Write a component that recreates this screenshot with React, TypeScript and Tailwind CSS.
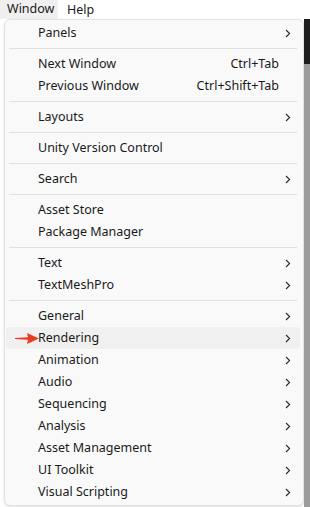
const groups: { label: string; shortcut?: string; sub?: boolean; active?: boolean }[][] = [
  [{ label: "Panels", sub: true }],
  [
    { label: "Next Window", shortcut: "Ctrl+Tab" },
    { label: "Previous Window", shortcut: "Ctrl+Shift+Tab" },
  ],
  [{ label: "Layouts", sub: true }],
  [{ label: "Unity Version Control" }],
  [{ label: "Search", sub: true }],
  [{ label: "Asset Store" }, { label: "Package Manager" }],
  [
    { label: "Text", sub: true },
    { label: "TextMeshPro", sub: true },
  ],
  [
    { label: "General", sub: true },
    { label: "Rendering", sub: true, active: true },
    { label: "Animation", sub: true },
    { label: "Audio", sub: true },
    { label: "Sequencing", sub: true },
    { label: "Analysis", sub: true },
    { label: "Asset Management", sub: true },
    { label: "UI Toolkit", sub: true },
    { label: "Visual Scripting", sub: true },
  ],
];

const Chevron = () => (
  <svg width="6" height="9" viewBox="0 0 6 9" className="shrink-0">
    <path d="M1 1 L4.6 4.5 L1 8" fill="none" stroke="#2b2b2b" strokeWidth="1.1" />
  </svg>
);

const RedArrow = () => (
  <svg width="25" height="11" viewBox="0 0 25 11" className="absolute left-[9px] top-[6px]">
    <path d="M0 4.9 L13 4.2 L12 0 L24 5.5 L12 11 L13 6.8 L0 6.1 Z" fill="#ea3a20" />
  </svg>
);

export default function App() {
  return (
    <div
      className="w-[310px] h-[507px] overflow-hidden bg-white text-[12.5px] text-[#1a1a1a]"
      style={{ fontFamily: '"Noto Sans", "Liberation Sans", sans-serif' }}
    >
      <div className="flex h-[19px] items-center bg-white">
        <div className="h-full w-[58px] bg-[#f0f0f0] pl-[7px] leading-[18px]">Window</div>
        <div className="pl-[9px] leading-[18px]">Help</div>
      </div>
      <div className="flex h-[488px]">
        <div className="w-[4px] bg-white" />
        <div className="w-[300px] h-[487px] rounded-md border border-[#e3e3e3] bg-[#f9f9f9] pt-[2px] shadow-sm">
          {groups.map((g, gi) => (
            <div key={gi}>
              {gi > 0 && (
                <div className="flex h-[9px] items-center pl-[4px] pr-[6px]">
                  <div className="h-px w-full bg-[#e0e0e0]" />
                </div>
              )}
              {g.map((it) => (
                <div
                  key={it.label}
                  className={`relative ml-[1px] mr-[3px] flex h-[22px] items-center rounded-[4px] pl-[32px] pr-[9px] ${
                    it.active ? "bg-[#f0f0f0]" : ""
                  }`}
                >
                  {it.active && <RedArrow />}
                  <span className="flex-1">{it.label}</span>
                  {it.shortcut && <span className="mr-[12px]">{it.shortcut}</span>}
                  {it.sub && <Chevron />}
                </div>
              ))}
            </div>
          ))}
        </div>
        <div className="flex w-[6px] flex-col">
          <div className="h-[45px] bg-[#1e1e1e]" />
          <div className="flex-1 bg-[#9c9c9c]" />
        </div>
      </div>
    </div>
  );
}
